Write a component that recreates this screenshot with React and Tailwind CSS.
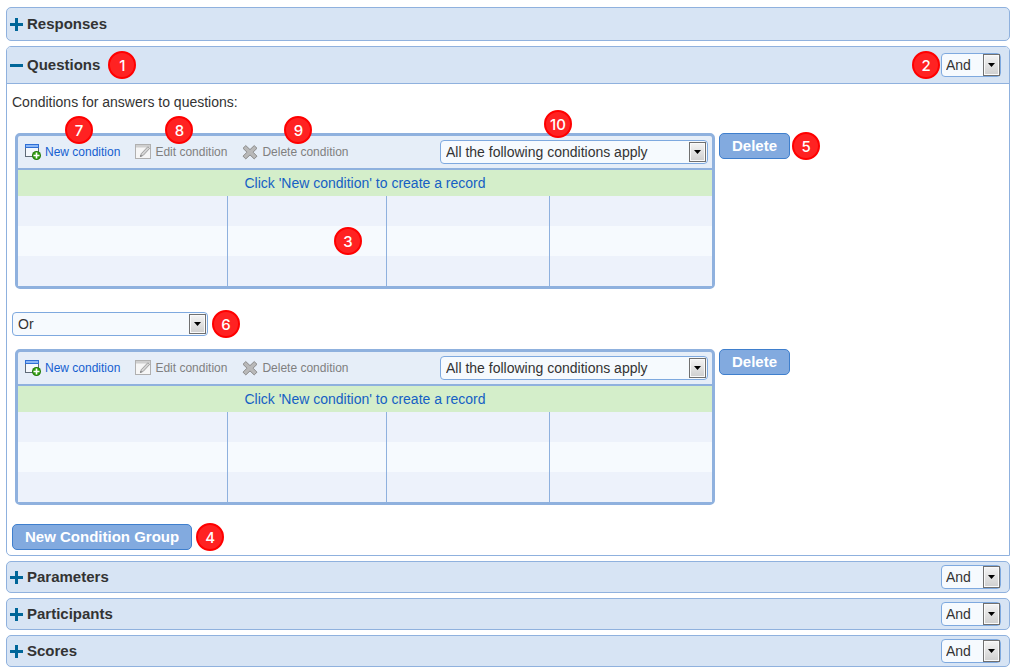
import clsx from 'clsx';

function Badge({ n, className }) {
    return (
        <span
            className={clsx(
                'flex size-7 shrink-0 items-center justify-center rounded-full border-2 border-[#ff0000] bg-[#ff2222] text-[15px] leading-none font-medium text-white font-[Inter,sans-serif]',
                className
            )}
        >
            {n}
        </span>
    );
}

function PlusIcon() {
    return (
        <svg className="size-[13px] shrink-0" viewBox="0 0 13 13" fill="#006699">
            <path d="M5 0h3v5h5v3H8v5H5V8H0V5h5z" />
        </svg>
    );
}

function MinusIcon() {
    return (
        <svg className="size-[13px] shrink-0" viewBox="0 0 13 13" fill="#006699">
            <path d="M0 5h13v3H0z" />
        </svg>
    );
}

function NewIcon() {
    return (
        <svg className="size-4 shrink-0" viewBox="0 0 16 16">
            <rect x="0.5" y="0.5" width="13" height="12" fill="#f4f8fd" stroke="#5f6b78" />
            <path d="M0 0h14v4H0z" fill="#2f6fd6" />
            <path d="M1 1h12v2H1z" fill="#8db8f5" />
            <circle cx="11.5" cy="11.5" r="4.5" fill="#1d7a05" />
            <circle cx="11.5" cy="11.5" r="3.4" fill="#35a012" />
            <path d="M10.7 8.5h1.6v2.2h2.2v1.6h-2.2v2.2h-1.6v-2.2H8.5v-1.6h2.2z" fill="#fff" />
        </svg>
    );
}

function EditIcon() {
    return (
        <svg className="size-4 shrink-0" viewBox="0 0 16 16">
            <rect x="0.5" y="0.5" width="15" height="14" fill="#f6f6f6" stroke="#b0b0b0" />
            <path d="M1 1h14v2.5H1z" fill="#cfcfcf" />
            <path d="M12.8 2.8l1.9 1.6-6.5 7-2.8 1.2.9-3z" fill="#d4d4d4" stroke="#909090" strokeWidth="0.8" />
            <path d="M5.2 12.8l.5-1.8 1.3 1.1z" fill="#666" />
        </svg>
    );
}

function DeleteIcon() {
    return (
        <svg className="size-4 shrink-0" viewBox="0 0 16 16">
            <path
                d="M3.8 1.6L8 5.6l4.2-4L15 4.3 11 8.2l4 4-2.8 2.7L8 10.9l-4.2 4L1 12.2l4-4-4-3.9z"
                fill="#b9b9b9"
                stroke="#8c8c8c"
                strokeLinejoin="round"
            />
        </svg>
    );
}

function Select({ label, options, className, flush }) {
    return (
        <span className={clsx('relative inline-flex', className)}>
            <select
                aria-label={label}
                className={clsx(
                    'h-6 w-full appearance-none rounded-[4px] border border-[#7ea9df] bg-[#f6fafe] text-[14px] leading-5 text-[#333]',
                    flush ? 'pl-1' : 'pl-[5px]'
                )}
            >
                {options.map((o) => (
                    <option key={o}>{o}</option>
                ))}
            </select>
            <span
                className={clsx(
                    'pointer-events-none absolute flex w-[17px] items-center justify-center border border-[#707070] bg-linear-to-b from-[#f4f4f4] to-[#cfcfcf] inset-ring inset-ring-[#fafafa]',
                    flush ? 'inset-y-px right-px' : 'inset-y-[2px] right-[2px]'
                )}
            >
                <svg className="h-1 w-[7px]" viewBox="0 0 7 4">
                    <path d="M0 0h7L3.5 4z" />
                </svg>
            </span>
        </span>
    );
}

function AndSelect({ section }) {
    return <Select label={section + ' operator'} options={['And', 'Or']} className="w-[60px]" flush />;
}

function ToolButton({ icon, text, disabled, badge, badgeClass }) {
    return (
        <span className="relative">
            <button
                disabled={disabled}
                className={clsx(
                    'flex h-4 items-center gap-1 text-[12px] leading-4 whitespace-nowrap',
                    disabled ? 'text-[#808080]' : 'text-[#1560d0]'
                )}
            >
                {icon}
                {text}
            </button>
            {badge && <Badge n={badge} className={clsx('absolute', badgeClass)} />}
        </span>
    );
}

function ActionButton({ children }) {
    return (
        <button className="h-[26px] rounded-[5px] border border-[#3f7fcd] bg-[#82aadf] px-3 text-[15px] leading-6 font-bold whitespace-nowrap text-white">
            {children}
        </button>
    );
}

function ConditionGroup({ name, badges }) {
    return (
        <div className="ml-[3px] flex items-start gap-1">
            <div className="w-[700px] rounded-[5px] border-3 border-[#8fb1de] bg-[#e6eef8]">
                <div className="flex h-[34px] items-center justify-between border-b-2 border-[#8fb1de] pr-1 pl-[7px]">
                    <div className="flex gap-[15px]">
                        <ToolButton icon={<NewIcon />} text="New condition" badge={badges && 7} badgeClass="-top-7 left-10" />
                        <ToolButton icon={<EditIcon />} text="Edit condition" disabled badge={badges && 8} badgeClass="-top-7 left-[30px]" />
                        <ToolButton icon={<DeleteIcon />} text="Delete condition" disabled badge={badges && 9} badgeClass="-top-7 left-[42px]" />
                    </div>
                    <span className="relative inline-flex">
                        <Select
                            label={name + ' match'}
                            options={['All the following conditions apply', 'Any of the following conditions apply']}
                            className="w-[268px]"
                        />
                        {badges && <Badge n={10} className="absolute -top-[30px] left-[104px]" />}
                    </span>
                </div>
                <table className="w-full table-fixed border-separate border-spacing-0">
                    <caption className="bg-[#d4eeca] text-center text-[14px] leading-[26px] text-[#1560c4]">
                        Click 'New condition' to create a record
                    </caption>
                    <colgroup>
                        <col className="w-[210px]" />
                        <col className="w-[159px]" />
                        <col className="w-[163px]" />
                        <col />
                    </colgroup>
                    <tbody>
                        {[0, 1, 2].map((row) => (
                            <tr key={row} className="h-[30px] odd:bg-[#edf2fb] even:bg-[#f6fafe]">
                                {[0, 1, 2, 3].map((col) => (
                                    <td key={col} className="relative border-r border-[#8fb1de] p-0 last:border-r-0">
                                        {badges && row === 1 && col === 1 && (
                                            <Badge n={3} className="absolute top-px left-[106px]" />
                                        )}
                                    </td>
                                ))}
                            </tr>
                        ))}
                    </tbody>
                </table>
            </div>
            <div className="flex h-[26px] items-center gap-[2px]">
                <ActionButton>Delete</ActionButton>
                {badges && <Badge n={5} />}
            </div>
        </div>
    );
}

function SectionTitle({ open, children }) {
    return (
        <h2>
            <button aria-expanded={!!open} className="flex items-center gap-1 text-[15px] leading-6 font-bold text-[#333]">
                {open ? <MinusIcon /> : <PlusIcon />}
                {children}
            </button>
        </h2>
    );
}

function CollapsedSection({ title, select }) {
    return (
        <section
            className={clsx(
                'flex items-center justify-between rounded-[5px] border border-[#8fb1de] bg-[#d7e4f4] pr-2 pl-[3px]',
                select ? 'py-[3px]' : 'py-1'
            )}
        >
            <SectionTitle>{title}</SectionTitle>
            {select && <AndSelect section={title} />}
        </section>
    );
}

export default function App() {
    return (
        <main className="flex flex-col gap-[5px] bg-white pt-[7px] pr-1 pb-[5px] pl-[6px] font-['Liberation_Sans',Arial,sans-serif] text-[#333]">
            <CollapsedSection title="Responses" />

            <section className="rounded-t-[5px] rounded-bl-[5px] border border-[#8fb1de]">
                <div className="flex items-center justify-between rounded-t-[4px] border-b border-[#8fb1de] bg-[#d7e4f4] py-[6px] pr-2 pl-[3px]">
                    <div className="flex h-6 items-center gap-2">
                        <SectionTitle open>Questions</SectionTitle>
                        <Badge n={1} />
                    </div>
                    <div className="flex h-6 items-center gap-px">
                        <Badge n={2} />
                        <AndSelect section="Questions" />
                    </div>
                </div>
                <div className="px-[5px] pt-2 pb-[5px]">
                    <p className="mb-[21px] text-[14px] leading-5">Conditions for answers to questions:</p>
                    <ConditionGroup name="Group 1" badges />
                    <div className="mt-[23px] mb-[13px] flex h-6 items-center gap-1">
                        <Select label="Group operator" options={['Or', 'And']} className="w-[196px]" />
                        <Badge n={6} />
                    </div>
                    <ConditionGroup name="Group 2" />
                    <div className="mt-[19px] flex h-[26px] items-center gap-1">
                        <ActionButton>New Condition Group</ActionButton>
                        <Badge n={4} />
                    </div>
                </div>
            </section>

            <CollapsedSection title="Parameters" select />
            <CollapsedSection title="Participants" select />
            <CollapsedSection title="Scores" select />
        </main>
    );
}
